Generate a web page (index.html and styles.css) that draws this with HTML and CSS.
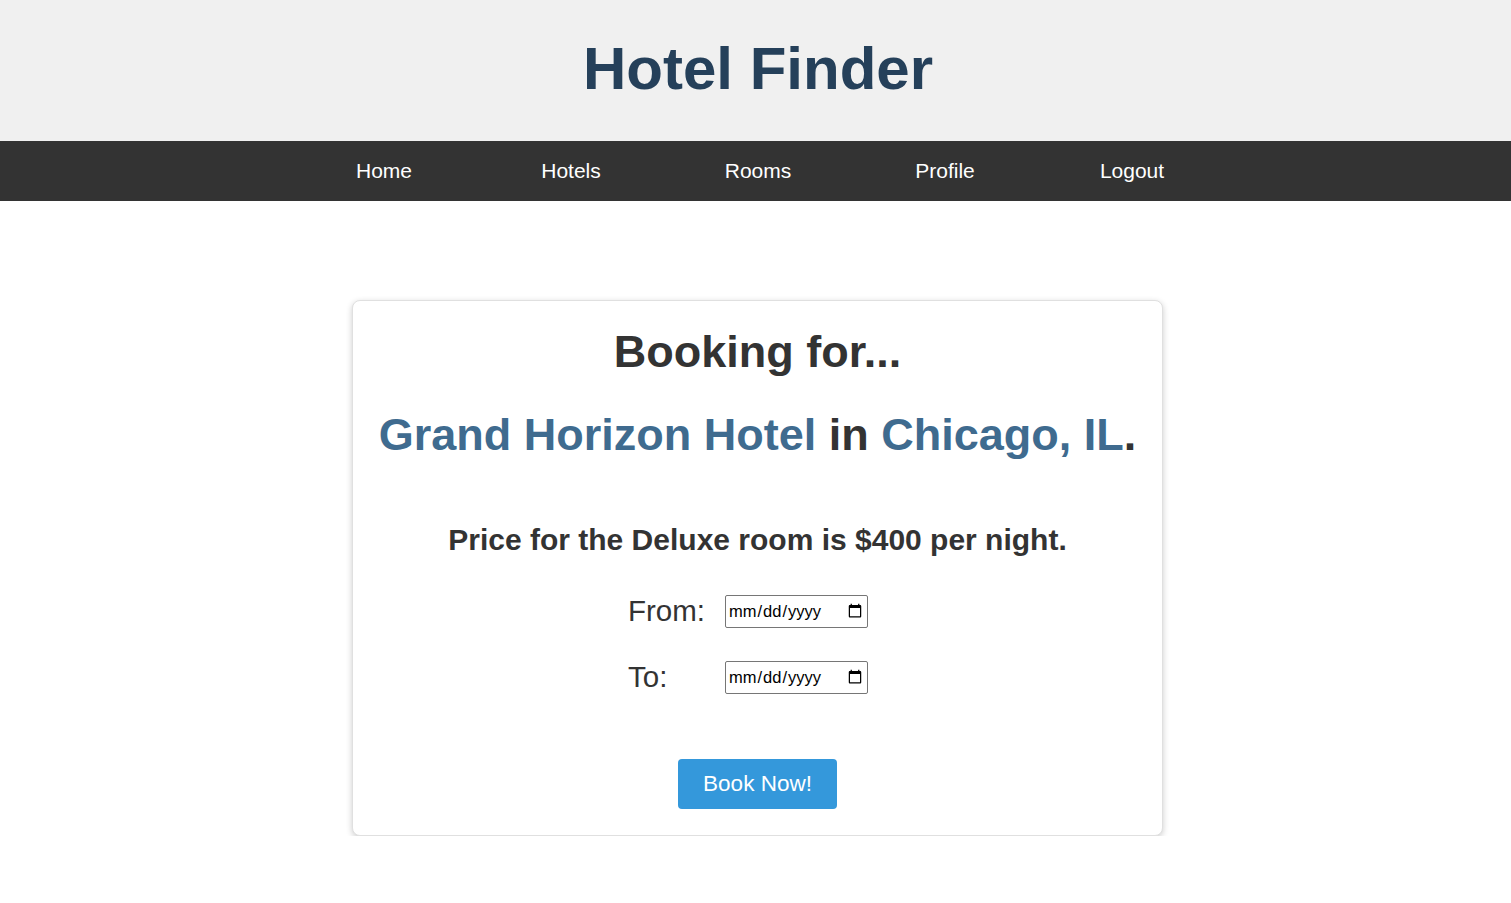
FILE: index.html
```html
<!DOCTYPE html>
<html lang="en">
<head>
<meta charset="utf-8">
<title>Hotel Finder</title>
<link rel="stylesheet" href="styles.css">
</head>
<body>
<header class="site-header">
  <h1 class="site-title">Hotel Finder</h1>
</header>
<nav class="main-nav">
  <a href="#" class="nav-link">Home</a>
  <a href="#" class="nav-link">Hotels</a>
  <a href="#" class="nav-link">Rooms</a>
  <a href="#" class="nav-link">Profile</a>
  <a href="#" class="nav-link">Logout</a>
</nav>
<main class="content">
  <section class="card">
    <h2 class="card-title">Booking for...</h2>
    <h2 class="hotel-line"><span class="accent">Grand Horizon Hotel</span> in <span class="accent">Chicago, IL</span>.</h2>
    <p class="price">Price for the Deluxe room is $400 per night.</p>
    <form class="booking-form">
      <div class="form-row">
        <label class="form-label" for="from">From:</label>
        <input class="date-input" type="date" id="from">
      </div>
      <div class="form-row">
        <label class="form-label" for="to">To:</label>
        <input class="date-input" type="date" id="to">
      </div>
      <button type="button" class="book-btn">Book Now!</button>
    </form>
  </section>
</main>
</body>
</html>
```

FILE: styles.css
```css
* { box-sizing: border-box; }
body {
  margin: 0;
  font-family: "Liberation Sans", Arial, sans-serif;
  color: #333;
  background: #fff;
}
.site-header {
  background: #f0f0f0;
  height: 141px;
  display: flex;
  align-items: center;
  justify-content: center;
  padding-left: 5px;
}
.site-title {
  margin: -3px 0 0;
  font-size: 60px;
  font-weight: bold;
  color: #25405a;
  line-height: 1;
}
.main-nav {
  background: #333;
  height: 60px;
  display: flex;
  align-items: center;
  justify-content: center;
  padding-left: 5px;
}
.nav-link {
  width: 187px;
  text-align: center;
  color: #fff;
  text-decoration: none;
  font-size: 21px;
}
.content {
  display: flex;
  justify-content: center;
  padding-top: 99px;
  padding-left: 4px;
}
.card {
  width: 811px;
  background: #fff;
  border: 1px solid #e0e0e0;
  border-radius: 8px;
  box-shadow: 0 2px 6px rgba(0,0,0,0.2);
  padding: 20px 20px 26px;
  display: flex;
  flex-direction: column;
  align-items: center;
}
.card-title {
  margin: 5px 0 0;
  font-size: 45px;
  line-height: 51px;
  color: #333;
}
.hotel-line {
  margin: 32px 0 0;
  font-size: 45px;
  line-height: 51px;
  color: #333;
}
.accent { color: #3f6b8f; }
.price {
  margin: 64px 0 0;
  font-size: 30px;
  font-weight: bold;
  line-height: 32px;
}
.booking-form {
  display: flex;
  flex-direction: column;
  align-items: center;
  margin-top: 38px;
}
.form-row {
  display: grid;
  grid-template-columns: 97px 143px;
  align-items: center;
  margin-right: 19px;
}
.form-row + .form-row { margin-top: 32px; }
.form-label {
  font-size: 29.5px;
  color: #333;
}
.date-input {
  width: 143px;
  height: 33px;
  font-family: "Liberation Sans", Arial, sans-serif;
  font-size: 16.5px;
  padding: 0 2px;
  border: 1px solid #767676;
  border-radius: 2px;
  color: #000;
}
.book-btn {
  margin-top: 65px;
  width: 159px;
  height: 50px;
  background: #3498db;
  color: #fff;
  border: none;
  border-radius: 4px;
  font-family: "Liberation Sans", Arial, sans-serif;
  font-size: 22.5px;
}
```
